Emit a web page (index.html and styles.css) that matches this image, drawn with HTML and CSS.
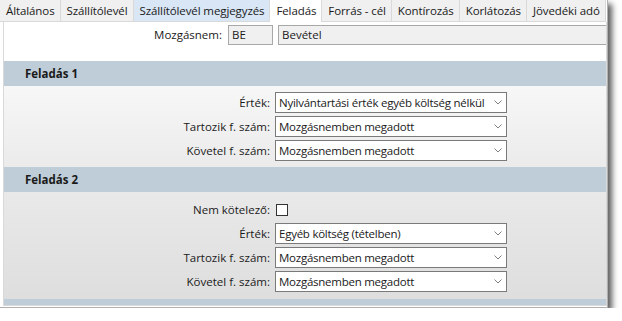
FILE: index.html
```html
<!DOCTYPE html>
<html lang="hu">
<head>
    <meta charset="UTF-8">
    <title>Feladás</title>
    <link rel="stylesheet" href="styles.css">
</head>
<body>
    <div class="window">
        <div class="tabs">
            <div class="tab">Általános</div>
            <div class="tab">Szállítólevél</div>
            <div class="tab hover">Szállítólevél megjegyzés</div>
            <div class="tab active">Feladás</div>
            <div class="tab">Forrás - cél</div>
            <div class="tab">Kontírozás</div>
            <div class="tab">Korlátozás</div>
            <div class="tab">Jövedéki adó</div>
        </div>

        <div class="panel">
            <div class="head-row">
                <label class="head-label">Mozgásnem:</label>
                <div class="textbox code">BE</div>
                <div class="textbox name">Bevétel</div>
            </div>

            <!-- Feladás 1 -->
            <div class="section-title">Feladás 1</div>
            <div class="section-body first">
                <label>Érték:</label>
                <div class="combo"><span>Nyilvántartási érték egyéb költség nélkül</span><svg viewBox="0 0 8 5"><path d="M0.5 0.5 L4 4 L7.5 0.5"/></svg></div>
                <label>Tartozik f. szám:</label>
                <div class="combo"><span>Mozgásnemben megadott</span><svg viewBox="0 0 8 5"><path d="M0.5 0.5 L4 4 L7.5 0.5"/></svg></div>
                <label>Követel f. szám:</label>
                <div class="combo"><span>Mozgásnemben megadott</span><svg viewBox="0 0 8 5"><path d="M0.5 0.5 L4 4 L7.5 0.5"/></svg></div>
            </div>

            <!-- Feladás 2 -->
            <div class="section-title">Feladás 2</div>
            <div class="section-body second">
                <label>Nem kötelező:</label>
                <div class="check-cell"><span class="checkbox"></span></div>
                <label>Érték:</label>
                <div class="combo"><span>Egyéb költség (tételben)</span><svg viewBox="0 0 8 5"><path d="M0.5 0.5 L4 4 L7.5 0.5"/></svg></div>
                <label>Tartozik f. szám:</label>
                <div class="combo"><span>Mozgásnemben megadott</span><svg viewBox="0 0 8 5"><path d="M0.5 0.5 L4 4 L7.5 0.5"/></svg></div>
                <label>Követel f. szám:</label>
                <div class="combo"><span>Mozgásnemben megadott</span><svg viewBox="0 0 8 5"><path d="M0.5 0.5 L4 4 L7.5 0.5"/></svg></div>
            </div>

            <div class="section-title"></div>
        </div>
    </div>
</body>
</html>
```

FILE: styles.css
```css
body {
    margin: 0;
    background: #fff;
    font-family: "Open Sans", "Noto Sans", sans-serif;
    font-size: 11.5px;
    color: #1a1a1a;
}
.window {
    width: 604px;
    height: 307px;
    padding-left: 3px;
    background: #fff;
    box-shadow: 4px 4px 6px rgba(0, 0, 0, 0.65);
    border-right: 1px solid #b0b0b0;
    border-bottom: 1px solid #b0b0b0;
}

/* tab strip */
.tabs {
    display: flex;
    height: 22px;
    margin-left: -3px;
}
.tab {
    height: 21px;
    line-height: 21px;
    padding: 0 5px 0 6px;
    background: #f0f0f0;
    border-right: 1px solid #d9d9d9;
    border-bottom: 1px solid #d9d9d9;
    white-space: nowrap;
    letter-spacing: -0.1px;
}
.tab.hover {
    background: #d8e6f5;
}
.tab.active {
    background: #fff;
    height: 22px;
    border-bottom: none;
}

/* tab page */
.panel {
    height: 283px;
    border: 1px solid #d9d9d9;
    border-top: none;
    overflow: hidden;
}
.head-row {
    display: flex;
    align-items: flex-start;
    height: 39px;
    padding-top: 3px;
    box-sizing: border-box;
    background: #fff;
}
.head-label {
    width: 218px;
    text-align: right;
    line-height: 20px;
    margin-right: 6px;
}
.textbox {
    height: 20px;
    line-height: 18px;
    box-sizing: border-box;
    padding-left: 3px;
    border: 1px solid #a8a8a8;
    background: #f0f0f0;
}
.textbox.code {
    width: 45px;
    margin-right: 5px;
}
.textbox.name {
    flex: 1;
    border-right: none;
}

.section-title {
    height: 25px;
    line-height: 25px;
    padding-left: 21px;
    background: #bfcdd9;
    font-weight: bold;
}
.section-body {
    display: grid;
    grid-template-columns: 266px 232px;
    grid-auto-rows: 21px;
    column-gap: 5px;
    row-gap: 3px;
    align-items: center;
}
.section-body.first {
    padding: 6px 0;
    background: linear-gradient(#f7f7f7, #ebebeb);
}
.section-body.second {
    padding: 7px 0;
    background: linear-gradient(#e9e9e9, #dedede);
}
.section-body label {
    text-align: right;
}

.combo {
    display: flex;
    align-items: center;
    height: 21px;
    box-sizing: border-box;
    border: 1px solid #7a7a7a;
    background: #fff;
    padding: 0 4px 0 3px;
}
.combo span {
    flex: 1;
    white-space: nowrap;
    overflow: hidden;
    letter-spacing: -0.25px;
}
.combo svg {
    width: 8px;
    height: 5px;
    margin-left: 3px;
    fill: none;
    stroke: #808080;
    stroke-width: 1;
}
.check-cell {
    display: flex;
    align-items: center;
    padding-left: 1px;
}
.checkbox {
    width: 12px;
    height: 12px;
    box-sizing: border-box;
    border: 1px solid #333;
    background: #fff;
}
```
